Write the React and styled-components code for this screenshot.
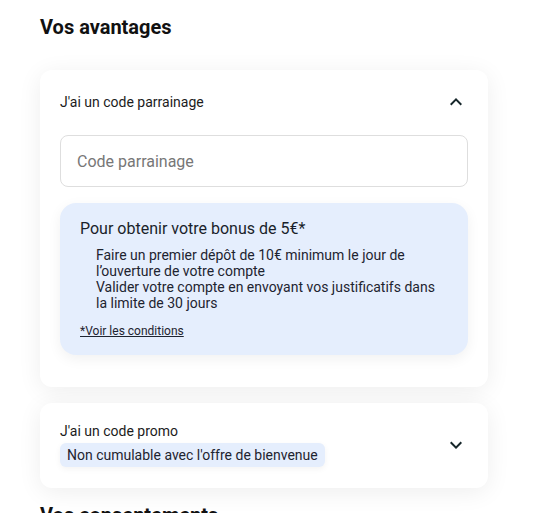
import React from "react";
import styled, { createGlobalStyle } from "styled-components";

const GlobalStyle = createGlobalStyle`
  html, body {
    margin: 0;
    padding: 0;
    background: #ffffff;
    font-family: Roboto, "Noto Sans", Arial, sans-serif;
    color: #1c1c1c;
  }
`;

const Page = styled.main`
  width: 448px;
  padding: 13px 40px 40px;
`;

const Section = styled.section`
  display: flex;
  flex-direction: column;
  gap: 16px;
  & + & {
    margin-top: 13px;
  }
`;

const SectionTitle = styled.h2`
  margin: 0 0 13px;
  font-size: 20px;
  line-height: 28px;
  font-weight: 700;
  color: #111;
`;

const Card = styled.div`
  background: #fff;
  border-radius: 12px;
  box-shadow: 0 4px 24px rgba(0, 0, 0, 0.07);
  padding: 20px 20px ${(p) => (p.$open ? "32px" : "21px")};
`;

const Header = styled.div`
  display: flex;
  align-items: center;
  justify-content: space-between;
  min-height: 24px;
`;

const HeaderText = styled.div`
  display: flex;
  flex-direction: column;
  align-items: flex-start;
  gap: 4px;
`;

const Label = styled.span`
  font-size: 14px;
  line-height: ${(p) => (p.$tight ? "16px" : "20px")};
  color: #1c1c1c;
`;

const Badge = styled.span`
  display: inline-block;
  padding: 0 7px;
  border-radius: 6px;
  background: #e5eefd;
  font-size: 14px;
  line-height: 24px;
  color: #1e2430;
  box-shadow: 0 2px 6px rgba(0, 0, 0, 0.05);
`;

const IconButton = styled.button`
  width: 24px;
  height: 24px;
  padding: 0;
  border: 0;
  background: none;
  display: flex;
  align-items: center;
  justify-content: center;
  color: #16262a;
  cursor: pointer;
`;

const Body = styled.div`
  display: flex;
  flex-direction: column;
  gap: 16px;
  margin-top: 21px;
`;

const Input = styled.input`
  box-sizing: border-box;
  width: 100%;
  height: 52px;
  padding: 0 16px;
  border: 1px solid #dedede;
  border-radius: 8px;
  font-family: inherit;
  font-size: 16px;
  color: #1c1c1c;
  outline: none;
  &::placeholder {
    color: #777;
  }
`;

const InfoBox = styled.div`
  background: #e5eefd;
  border-radius: 16px;
  padding: 16px 20px;
  box-shadow: 0 4px 14px rgba(0, 0, 0, 0.06);
`;

const InfoTitle = styled.p`
  margin: 0;
  font-size: 16px;
  line-height: 20px;
  color: #1a1f2b;
`;

const Steps = styled.ul`
  margin: 8px 0 0;
  padding: 0 0 0 16px;
  list-style: none;
`;

const Step = styled.li`
  font-size: 14px;
  line-height: 16px;
  color: #1e2430;
`;

const Conditions = styled.a`
  display: inline-block;
  margin-top: 12px;
  font-size: 12px;
  line-height: 16px;
  color: #1e2430;
  text-decoration: underline;
`;

const Chevron = ({ up }) => (
  <svg width="24" height="24" viewBox="0 0 24 24" fill="currentColor" aria-hidden="true">
    {up ? (
      <path d="M12 8l-6 6 1.41 1.41L12 10.83l4.59 4.58L18 14z" />
    ) : (
      <path d="M16.59 8.59L12 13.17 7.41 8.59 6 10l6 6 6-6z" />
    )}
  </svg>
);

export default function App() {
  return (
    <>
      <GlobalStyle />
      <Page>
        <Section>
          <SectionTitle>Vos avantages</SectionTitle>
          <Card $open>
            <Header>
              <Label>J'ai un code parrainage</Label>
              <IconButton aria-label="Replier">
                <Chevron up />
              </IconButton>
            </Header>
            <Body>
              <Input placeholder="Code parrainage" />
              <InfoBox>
                <InfoTitle>Pour obtenir votre bonus de 5€*</InfoTitle>
                <Steps>
                  <Step>
                    Faire un premier dépôt de 10€ minimum le jour de l’ouverture de votre compte
                  </Step>
                  <Step>
                    Valider votre compte en envoyant vos justificatifs dans la limite de 30 jours
                  </Step>
                </Steps>
                <Conditions href="#">*Voir les conditions</Conditions>
              </InfoBox>
            </Body>
          </Card>
          <Card>
            <Header>
              <HeaderText>
                <Label $tight>J'ai un code promo</Label>
                <Badge>Non cumulable avec l'offre de bienvenue</Badge>
              </HeaderText>
              <IconButton aria-label="Déplier">
                <Chevron />
              </IconButton>
            </Header>
          </Card>
        </Section>
        <Section>
          <SectionTitle>Vos consentements</SectionTitle>
        </Section>
      </Page>
    </>
  );
}
